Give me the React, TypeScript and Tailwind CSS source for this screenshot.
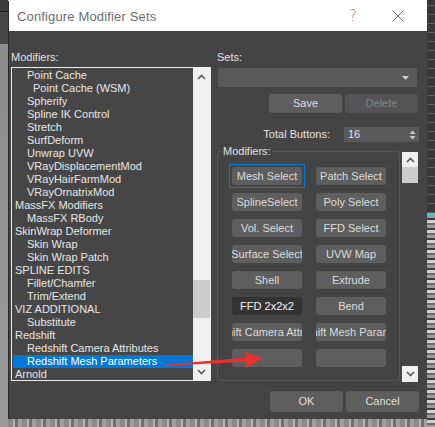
import React from 'react';

type Item = { label: string; level: number; selected?: boolean };

const items: Item[] = [
  { label: 'Point Cache', level: 1 },
  { label: 'Point Cache (WSM)', level: 2 },
  { label: 'Spherify', level: 1 },
  { label: 'Spline IK Control', level: 1 },
  { label: 'Stretch', level: 1 },
  { label: 'SurfDeform', level: 1 },
  { label: 'Unwrap UVW', level: 1 },
  { label: 'VRayDisplacementMod', level: 1 },
  { label: 'VRayHairFarmMod', level: 1 },
  { label: 'VRayOrnatrixMod', level: 1 },
  { label: 'MassFX Modifiers', level: 0 },
  { label: 'MassFX RBody', level: 1 },
  { label: 'SkinWrap Deformer', level: 0 },
  { label: 'Skin Wrap', level: 1 },
  { label: 'Skin Wrap Patch', level: 1 },
  { label: 'SPLINE EDITS', level: 0 },
  { label: 'Fillet/Chamfer', level: 1 },
  { label: 'Trim/Extend', level: 1 },
  { label: 'VIZ ADDITIONAL', level: 0 },
  { label: 'Substitute', level: 1 },
  { label: 'Redshift', level: 0 },
  { label: 'Redshift Camera Attributes', level: 1 },
  { label: 'Redshift Mesh Parameters', level: 1, selected: true },
  { label: 'Arnold', level: 0 },
];

const indent = ['pl-[2px]', 'pl-[14px]', 'pl-[20px]'];

const modButtons = [
  'Mesh Select', 'Patch Select',
  'SplineSelect', 'Poly Select',
  'Vol. Select', 'FFD Select',
  'Surface Select', 'UVW Map',
  'Shell', 'Extrude',
  'FFD 2x2x2', 'Bend',
  'Redshift Camera Attributes', 'Redshift Mesh Parameters',
  '', '',
];

function Chevron({ up }: { up?: boolean }) {
  return (
    <svg width="9" height="6" viewBox="0 0 9 6">
      <path d={up ? 'M1 5 L4.5 1.5 L8 5' : 'M1 1 L4.5 4.5 L8 1'} fill="none" stroke="#5a5a5a" strokeWidth="1.6" />
    </svg>
  );
}

function Btn({ label, className = '' }: { label: string; className?: string }) {
  return (
    <div className={`flex items-center justify-center rounded-[3px] bg-[#5e5e5e] text-[#dedede] ${className}`}>
      {label}
    </div>
  );
}

export default function App() {
  return (
    <div className="flex w-[435px] h-[427px] overflow-hidden font-['Liberation_Sans',Arial,sans-serif] text-[11px] leading-[13px]">
      {/* left backdrop */}
      <div className="w-[8px] shrink-0 bg-[linear-gradient(to_bottom,#3b3b3b_0_11px,#1c1c1c_11px_12px,#474747_12px_44px,#8c8c8c_44px,#9a9a9a_100%)]" />

      <div className="flex flex-col w-[419px] shrink-0">
        <div className="relative flex flex-col h-[418px] mt-px border-l border-[#2a2a2a] bg-[#444444]">
          {/* title bar */}
          <div className="flex items-center h-[30px] bg-white pl-[8px] text-[13px] tracking-[0.15px] text-[#6e6e6e]">
            <span className="flex-1">Configure Modifier Sets</span>
            <span className="w-[20px] text-[15px] text-[#8a8a8a] font-['DejaVu_Sans',sans-serif] font-extralight">?</span>
            <div className="w-[58px] flex justify-center">
              <svg width="12" height="12" viewBox="0 0 12 12">
                <path d="M0.5 0.5 L11.5 11.5 M11.5 0.5 L0.5 11.5" stroke="#666" strokeWidth="1" />
              </svg>
            </div>
          </div>

          <div className="flex pl-[2px]">
            {/* left column */}
            <div className="flex flex-col w-[200px] pt-[20px]">
              <div className="h-[13px] text-[#e2e2e2]">Modifiers:</div>
              <div className="mt-[3px] flex h-[314px] border border-[#ececec] bg-[#464646]">
                <div className="flex-1 overflow-hidden pt-[1px] pl-px">
                  {items.map((it) => (
                    <div
                      key={it.label}
                      className={`h-[13px] whitespace-nowrap ${indent[it.level]} ${it.selected ? 'bg-[#0078d7] text-white' : 'text-[#e6e6e6]'}`}
                    >
                      {it.label}
                    </div>
                  ))}
                </div>
                <div className="w-[17px] bg-[#f0f0f0] flex flex-col">
                  <div className="h-[17px] flex items-center justify-center"><Chevron up /></div>
                  <div className="h-[195px]" />
                  <div className="h-[38px] bg-[#cdcdcd]" />
                  <div className="flex-1" />
                  <div className="h-[17px] flex items-center justify-center"><Chevron /></div>
                </div>
              </div>
            </div>

            {/* right column */}
            <div className="flex flex-col w-[203px] ml-[6px] pt-[20px]">
              <div className="h-[13px] text-[#e2e2e2]">Sets:</div>
              <div className="mt-[4px] ml-px w-[199px] h-[19px] rounded-[2px] bg-[#595959] flex items-center justify-end pr-[8px]">
                <svg width="7" height="4" viewBox="0 0 7 4"><path d="M0 0 H7 L3.5 4 Z" fill="#cfcfcf" /></svg>
              </div>
              <div className="mt-[7px] flex justify-end gap-[3px] pr-[2px]">
                <Btn label="Save" className="w-[73px] h-[19px]" />
                <div className="w-[73px] h-[19px] flex items-center justify-center rounded-[3px] bg-[#545454] text-[#828282]">Delete</div>
              </div>
              <div className="mt-[14px] flex items-center h-[15px]">
                <span className="w-[113px] text-right text-[#e2e2e2]">Total Buttons:</span>
                <div className="ml-[14px] w-[75px] h-[15px] bg-[#5a5a5a] flex items-center pl-[4px] text-[#e4e4e4]">
                  <span className="flex-1">16</span>
                  <svg width="7" height="10" viewBox="0 0 7 10" className="mr-[3px]">
                    <path d="M0.5 4 L3.5 0.5 L6.5 4 Z M0.5 6 L3.5 9.5 L6.5 6 Z" fill="#c8c8c8" />
                  </svg>
                </div>
              </div>
              <div className="mt-[9px] flex h-[231px]">
                <div className="relative w-[183px] h-[230px] rounded-[3px] border border-[#575757] pt-[15px] pl-[14px]">
                  <span className="absolute -top-[7px] left-[4px] px-px bg-[#444444] text-[#e2e2e2]">Modifiers:</span>
                  <div className="grid grid-cols-[70px_70px] gap-x-[14px] gap-y-[8px]">
                    {modButtons.map((m, i) => {
                      const active = m === 'FFD 2x2x2';
                      const focus = m === 'Mesh Select';
                      return (
                        <div key={i} className="relative">
                          <div
                            className={`h-[18px] rounded-[3px] flex items-center justify-center overflow-hidden whitespace-nowrap ${active ? 'bg-[#333333] text-[#f4f4f4]' : 'bg-[#5e5e5e] text-[#dcdcdc]'}`}
                          >
                            <span className="shrink-0">{m}</span>
                          </div>
                          {focus && <div className="absolute -inset-[3px] border border-[#0a78d6] pointer-events-none" />}
                        </div>
                      );
                    })}
                  </div>
                </div>
                <div className="ml-[2px] mt-px w-[16px] flex flex-col">
                  <div className="h-[15px] bg-[#f0f0f0] flex items-center justify-center"><Chevron up /></div>
                  <div className="h-[16px] bg-[#cdcdcd]" />
                  <div className="flex-1" />
                  <div className="h-[16px] bg-[#f0f0f0] flex items-center justify-center"><Chevron /></div>
                </div>
              </div>
            </div>
          </div>

          {/* bottom buttons */}
          <div className="mt-[9px] flex justify-end gap-[3px] pr-[8px]">
            <Btn label="OK" className="w-[73px] h-[21px]" />
            <Btn label="Cancel" className="w-[73px] h-[21px]" />
          </div>

          {/* red annotation arrow */}
          <svg className="absolute left-0 top-0 pointer-events-none" width="419" height="418" viewBox="8 1 419 418">
            <polygon points="163,364.8 246,357.4 243,351.8 262,357.8 245,368 246,361.4 163,366" fill="#ea2f2c" />
          </svg>
        </div>
        {/* backdrop under the dialog */}
        <div className="flex-1 bg-[repeating-linear-gradient(to_right,#8a8a8a_0_5px,#b5b5b5_5px_7px,#6f6f6f_7px_10px,#a0a0a0_10px_14px)]" />
      </div>

      {/* right backdrop */}
      <div className="w-[8px] shrink-0 flex flex-col">
        <div className="h-[213px] bg-[repeating-linear-gradient(to_bottom,#383838_0_5px,#5c5c5c_5px_6px,#383838_6px_9px)]" />
        <div className="h-[2px] bg-[#2fd0d8]" />
        <div className="flex-1 bg-[repeating-linear-gradient(to_bottom,#9c9c9c_0_3px,#3a3a3a_3px_5px,#d0d0d0_5px_8px,#6a6a6a_8px_10px)]" />
      </div>
    </div>
  );
}
